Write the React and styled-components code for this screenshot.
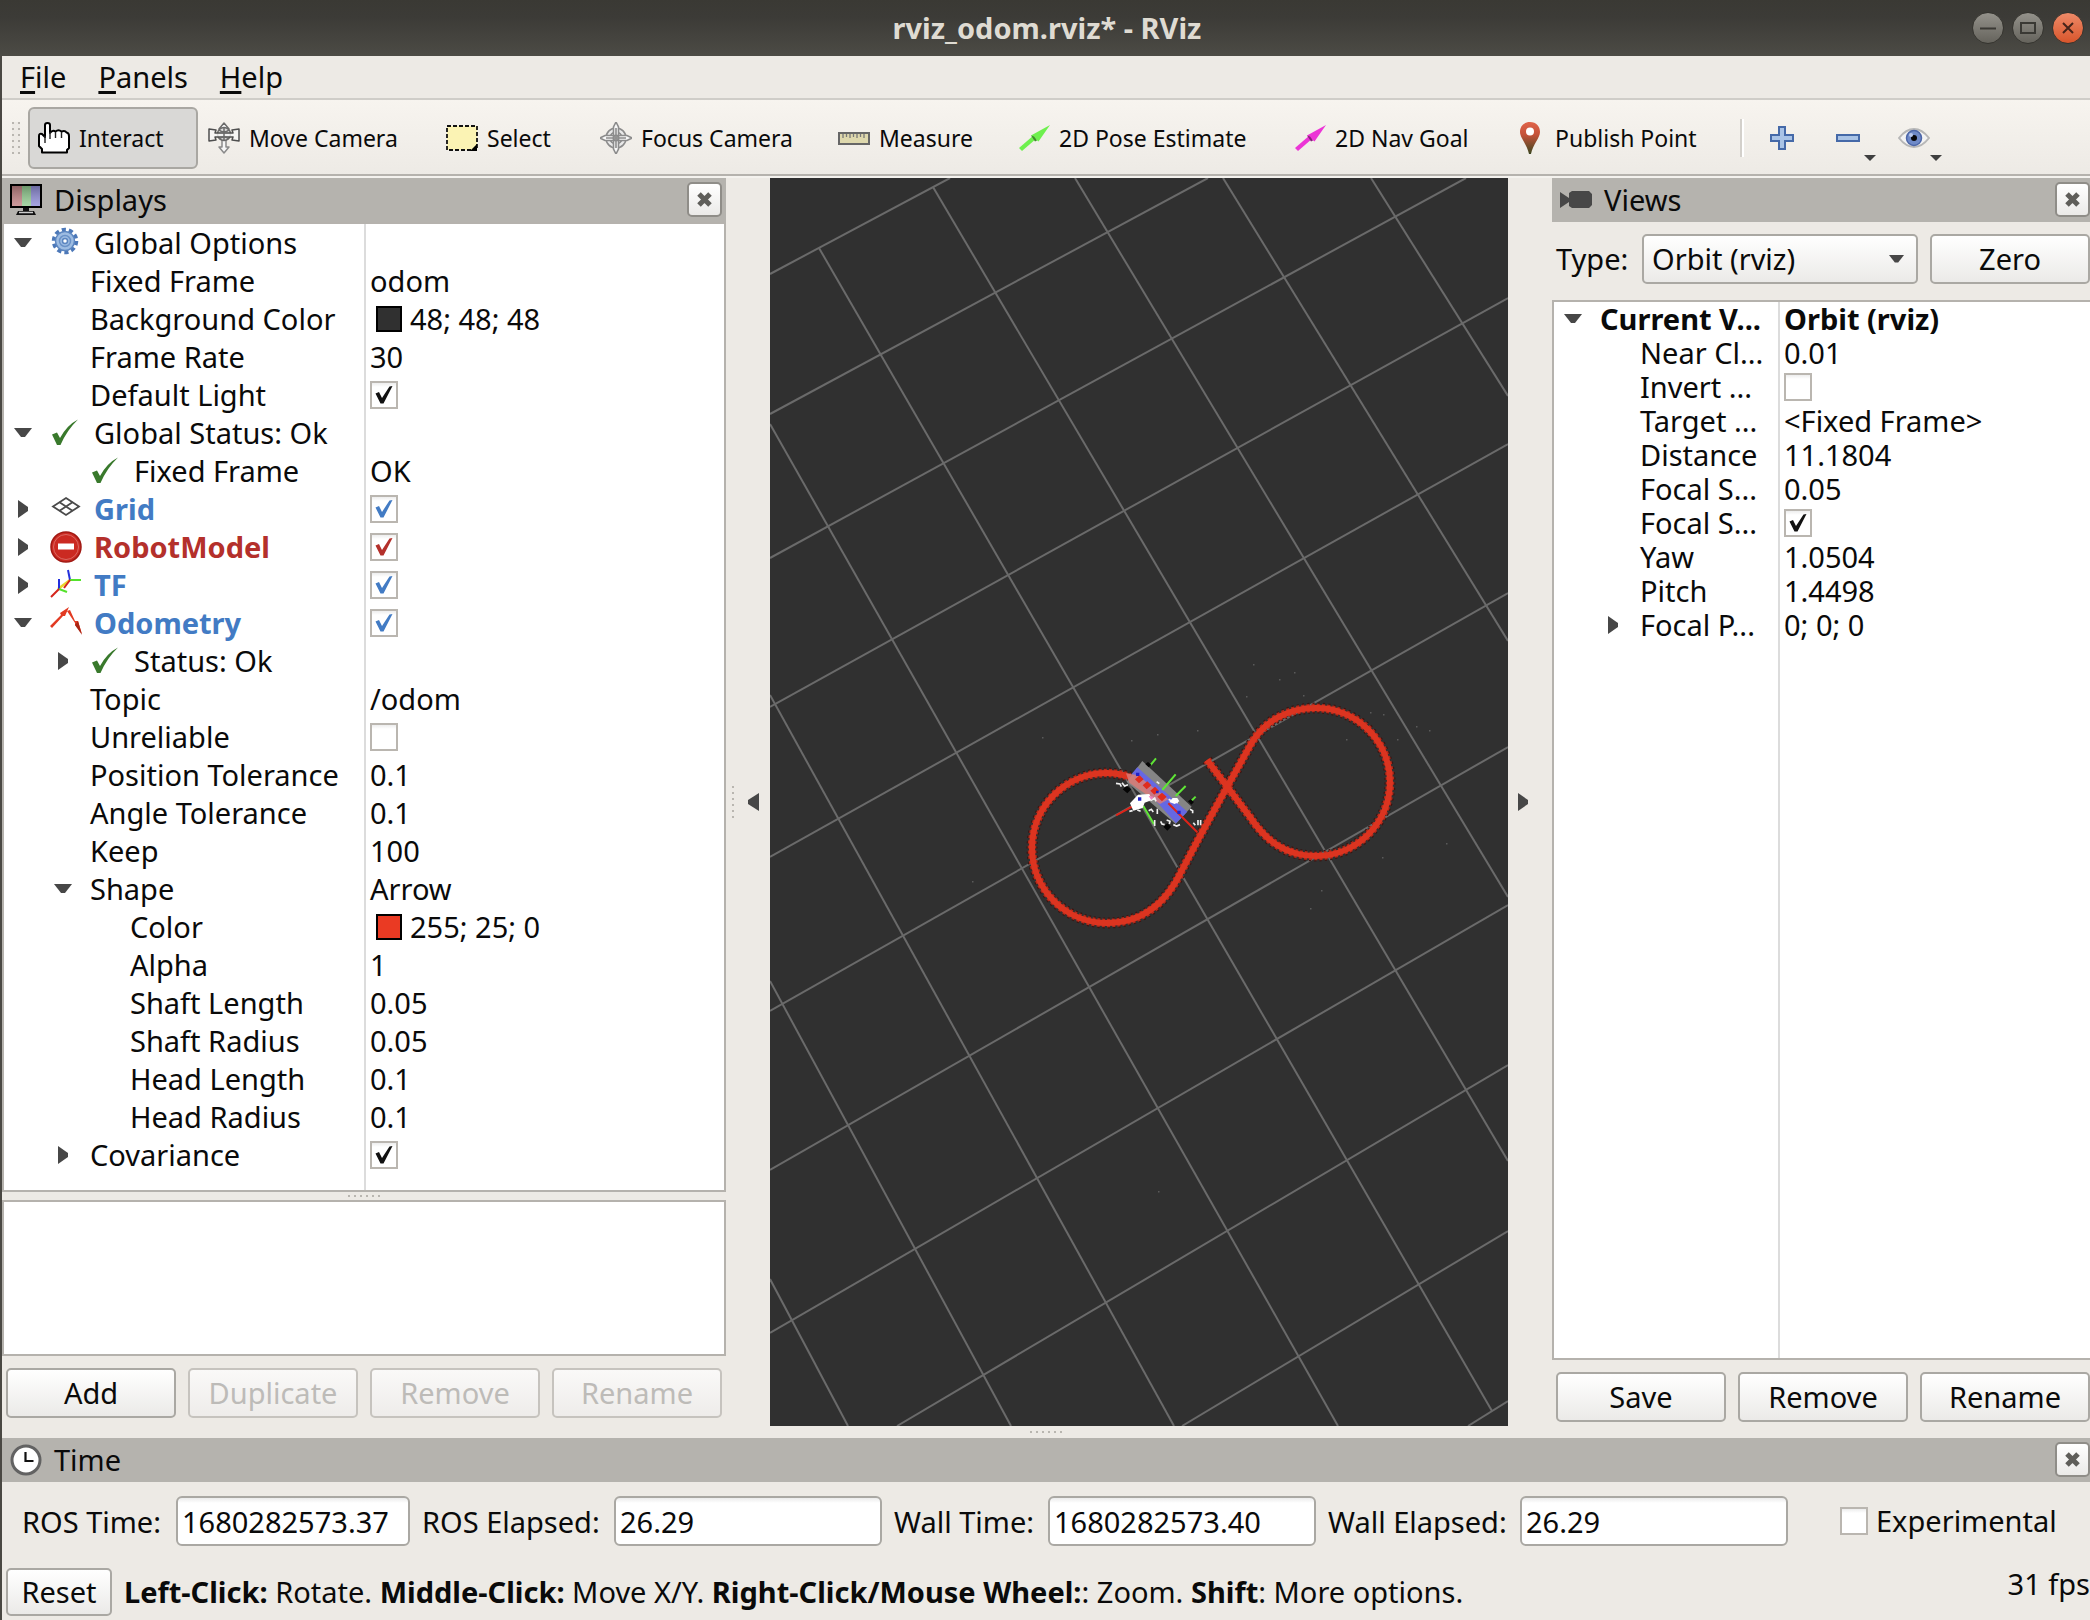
import React from "react";
import styled, { createGlobalStyle, css } from "styled-components";

const c = {
  window: "#edeae5",
  header: "#b5b3ae",
  line: "#b5b2ad",
  divider: "#dcdcdc",
  ink: "#0a0a0a",
  arrow: "#474747",
  blue: "#427bc4",
  red: "#b4302b",
};

const Global = createGlobalStyle`
  * { box-sizing: border-box; }
  body {
    margin: 0;
    background: ${c.window};
    color: ${c.ink};
    font: 29px/34px "Noto Sans", "Open Sans", sans-serif;
  }
  button, input, select { font: inherit; color: inherit; margin: 0; }
`;

const Window = styled.div`
  min-height: 100vh;
  display: flex;
  flex-direction: column;
  background: ${c.window};
  overflow: hidden;
`;

/* ---------- title bar ---------- */

const TitleBar = styled.header`
  height: 56px;
  flex: none;
  display: grid;
  grid-template-columns: 1fr auto 1fr;
  align-items: center;
  padding: 0 6px 0 10px;
  background: linear-gradient(#3a3934, #3c3b37 30%, #4c4b45);
`;

const Title = styled.h1`
  grid-column: 2;
  margin: 0;
  font-size: 29px;
  font-weight: 700;
  color: #dfdbd2;
`;

const WindowButtons = styled.div`
  display: flex;
  justify-content: flex-end;
  gap: 8px;
`;

const RoundButton = styled.button`
  width: 32px;
  height: 32px;
  padding: 0;
  border: 1px solid #35342f;
  border-radius: 50%;
  display: grid;
  place-items: center;
  background: ${(p) =>
    p.$close ? "linear-gradient(#ee8a68, #d8552b)" : "linear-gradient(#94928b, #65635c)"};
`;

const Body = styled.div`
  flex: 1;
  display: flex;
  flex-direction: column;
  border-left: 2px solid #4a4843;
`;

/* ---------- menu and tool bar ---------- */

const MenuBar = styled.nav`
  height: 44px;
  display: flex;
  align-items: center;
  padding-left: 2px;
  border-bottom: 2px solid #cfcdc8;
`;

const MenuItem = styled.button`
  padding: 0 16px;
  border: 0;
  background: none;
  line-height: 34px;
`;

const Mnemonic = styled.span`
  text-decoration: underline 3px;
  text-underline-offset: 3px;
`;

const ToolBar = styled.div`
  height: 78px;
  display: flex;
  align-items: center;
  padding: 0 8px;
  background: linear-gradient(#f7f4ef, ${c.window});
  border-bottom: 2px solid #f4f2ee;
  box-shadow: inset 0 -2px 0 ${c.line};
  font-size: 23px;
`;

const Dots = styled.span`
  display: block;
  width: ${(p) => p.$w}px;
  height: ${(p) => p.$h}px;
  background: conic-gradient(from 90deg at 4px 4px, transparent 75%, #b9b6b0 0) 0 0 / 6px 6px;
  background: linear-gradient(90deg, ${c.window} 4px, transparent 4px) 2px 0 / 6px 100%,
    repeating-linear-gradient(#b9b6b0 0 2px, ${c.window} 2px 6px);
`;

const Grip = styled.span`
  width: 18px;
  flex: none;
  padding-left: 2px;
`;

const ToolButton = styled.button`
  height: 62px;
  min-width: ${(p) => p.$w}px;
  display: flex;
  align-items: center;
  gap: 9px;
  padding: 0 0 0 8px;
  border: 2px solid transparent;
  border-radius: 6px;
  background: none;
  white-space: nowrap;
  ${(p) =>
    p.$active &&
    css`
      background: #d9d8d6;
      border-color: #a9a7a2;
    `}
`;

const ToolRule = styled.span`
  width: 4px;
  height: 38px;
  margin: 0 6px 0 20px;
  border-left: 2px solid #d3d0cb;
  border-right: 2px solid #fff;
`;

const IconTool = styled.button`
  width: 66px;
  height: 62px;
  padding: 0;
  border: 0;
  background: none;
  display: grid;
  grid-template-columns: 16px 32px 18px;
  align-items: center;
`;

const IconToolMain = styled.span`
  grid-column: 2;
  display: flex;
`;

const DropMark = styled.span`
  align-self: end;
  margin: 0 0 8px 0;
  border: 6px solid transparent;
  border-top-color: #3f3f3f;
  border-bottom-width: 0;
  width: 12px;
`;

/* ---------- dock panels ---------- */

const Main = styled.main`
  flex: 1;
  display: grid;
  grid-template-columns: 724px 44px minmax(0, 1fr) 44px 538px;
`;

const Panel = styled.section`
  display: flex;
  flex-direction: column;
  min-width: 0;
`;

const PanelHeader = styled.div`
  height: 44px;
  flex: none;
  display: flex;
  align-items: center;
  gap: 12px;
  padding: 0 ${(p) => p.$right}px 0 8px;
  background: ${c.header};
`;

const PanelTitle = styled.h2`
  flex: 1;
  margin: 0;
  font-size: 29px;
  font-weight: 400;
`;

const CloseButton = styled.button`
  width: 35px;
  height: 35px;
  padding: 0;
  margin-bottom: 2px;
  border: 2px solid #8f8d88;
  border-radius: 5px;
  background: linear-gradient(#fff, #ebeae8);
  display: grid;
  place-items: center;
`;

const TreePane = styled.div`
  flex: 1;
  border: 2px solid ${c.line};
  border-right-width: ${(p) => (p.$openRight ? 0 : 2)}px;
  background: linear-gradient(${c.divider}, ${c.divider}) ${(p) => p.$name}px 0 / 2px 100% no-repeat #fff;
`;

const Tree = styled.table`
  width: 100%;
  table-layout: fixed;
  border-collapse: collapse;
`;

const NameCol = styled.col`
  width: ${(p) => p.$w}px;
`;

const TreeRow = styled.tr`
  height: ${(p) => p.$h}px;
  color: ${(p) => p.$color || c.ink};
  font-weight: ${(p) => (p.$bold ? 700 : 400)};
`;

const Cell = styled.td`
  padding: 0;
`;

const NameInner = styled.div`
  height: 34px;
  display: flex;
  align-items: center;
  padding-left: ${(p) => p.$level * 40}px;
  white-space: nowrap;
`;

const ExpandSlot = styled.span`
  width: 46px;
  flex: none;
  padding-left: 10px;
  display: flex;
`;

const IconSlot = styled.span`
  width: 32px;
  height: 32px;
  flex: none;
  display: flex;
  margin-right: 12px;
`;

const ValueInner = styled.div`
  height: 34px;
  display: flex;
  align-items: center;
  padding-left: 6px;
  white-space: nowrap;
`;

const Swatch = styled.span`
  width: 26px;
  height: 26px;
  margin: 0 8px 0 6px;
  border: 2px solid #000;
  background: ${(p) => p.$color};
`;

const CheckWrap = styled.span`
  display: grid;
  width: 28px;
  height: 28px;
  flex: none;
  & > * { grid-area: 1 / 1; }
  & > svg { pointer-events: none; }
`;

const CheckBox = styled.input`
  appearance: none;
  width: 28px;
  height: 28px;
  border: 2px solid #bab6b0;
  background: linear-gradient(#ededed, #fff 4px);
`;

const Splitter = styled.div`
  height: ${(p) => p.$h}px;
  display: grid;
  place-items: center;
  flex: none;
`;

const Description = styled.div`
  height: 156px;
  flex: none;
  border: 2px solid ${c.line};
  background: #fff;
`;

const ButtonRow = styled.div`
  display: grid;
  grid-template-columns: repeat(${(p) => p.$n}, 1fr);
  gap: 12px;
  padding: 12px 4px ${(p) => p.$bottom}px;
  ${(p) => p.$flush && "padding-right: 0;"}
`;

const control = css`
  border: 2px solid #aaa8a3;
  border-radius: 5px;
  background: linear-gradient(#fff, #ebeae8);
`;

const Button = styled.button`
  height: ${(p) => p.$h || 50}px;
  padding: 0 10px;
  ${control}
  &:disabled {
    color: #bdbbb8;
    border-color: #c6c3be;
    background: linear-gradient(#faf9f8, #eeecea);
  }
`;

const TypeRow = styled.div`
  display: grid;
  grid-template-columns: 74px 276px 1fr;
  column-gap: 12px;
  align-items: center;
  padding: 12px 0 16px 4px;
`;

const ComboWrap = styled.span`
  display: grid;
  align-items: center;
  & > * { grid-area: 1 / 1; }
  & > svg { justify-self: end; margin-right: 14px; pointer-events: none; }
`;

const Combo = styled.select`
  appearance: none;
  height: 50px;
  width: 100%;
  padding: 0 8px;
  ${control}
`;

const Side = styled.div`
  display: flex;
  align-items: center;
  justify-content: space-between;
  padding: ${(p) => (p.$right ? "0 4px 0 6px" : "0 11px 0 6px")};
`;

const SideButton = styled.button`
  padding: 0;
  border: 0;
  background: none;
  display: flex;
`;

const Viewport = styled.div`
  background: #303030;
  display: flex;
  min-width: 0;
  & > svg { width: 100%; height: 100%; display: block; }
`;

/* ---------- time panel and status ---------- */

const TimeRow = styled.div`
  display: grid;
  grid-template-columns: 146px 234px 184px 268px 146px 268px 184px 268px 1fr;
  column-gap: 10px;
  align-items: center;
  padding: 14px 0 22px 18px;
`;

const Field = styled.input`
  height: 50px;
  width: 100%;
  min-width: 0;
  padding: 0 4px;
  border: 2px solid #aaa8a3;
  border-radius: 6px;
  background: linear-gradient(#ececec, #fff 5px);
`;

const FieldLabel = styled.label`
  padding: 2px 0 0 2px;
  white-space: nowrap;
`;

const Experimental = styled.label`
  display: flex;
  align-items: center;
  gap: 8px;
  padding-left: 42px;
  white-space: nowrap;
`;

const StatusRow = styled.footer`
  display: grid;
  grid-template-columns: 106px 1fr auto;
  column-gap: 12px;
  align-items: center;
  padding: 0 0 4px 4px;
`;

const Hint = styled.p`
  margin: 0;
  white-space: nowrap;
`;

const Fps = styled.span`
  align-self: start;
  line-height: 32px;
`;

/* ---------- icons ---------- */

const Svg = ({ children, size = 32, box = 32, ...rest }) => (
  <svg width={size} height={size} viewBox={`0 0 ${box} ${box}`} aria-hidden="true" {...rest}>
    {children}
  </svg>
);

const ArrowDown = ({ w = 18 }) => (
  <svg width={w} height="11" viewBox="0 0 18 11" aria-hidden="true">
    <path d="M0 0h18L11 9H7z" fill={c.arrow} />
  </svg>
);
const ArrowRight = () => (
  <svg width="18" height="18" viewBox="0 0 18 18" aria-hidden="true">
    <path d="M4 0l10 7v4L4 18z" fill={c.arrow} />
  </svg>
);
const ArrowLeft = () => (
  <svg width="11" height="18" viewBox="0 0 11 18" aria-hidden="true">
    <path d="M11 0L0 7v4l11 7z" fill={c.arrow} />
  </svg>
);

const HandIcon = () => (
  <Svg>
    <path
      d="M4 30.5V27L1 24V14Q1 11 4 12L7 15V3Q7 1 9.500 1T12 3V11Q14.500 7.500 17.500 9.500Q20.500 7 23.500 9.500Q27 8 28.500 10.500Q31 11 31 14V26L29 28V30.500Z"
      fill="#fff"
      stroke="#000"
      strokeWidth="2"
      strokeLinejoin="round"
    />
    <path d="M7 14v7M12 10v7M17.500 10v6M23.500 10v6" stroke="#222" strokeWidth="1.4" />
  </Svg>
);

const MoveIcon = () => (
  <Svg>
    <g stroke="#6b6b6b" strokeWidth="1.5" strokeLinejoin="round">
      <path d="M16 1l5 6h-3v5h-4V7h-3z" fill="#f6f6f6" />
      <path d="M16 31l5-6h-3v-8h-4v8h-3z" fill="#f6f6f6" stroke="#8a8a8a" />
      <circle cx="16" cy="12" r="6.5" fill="#dedede" />
      <path d="M1 7l7 1-1 3h18l-1-3 7-1v12l-7-1 1-3H7l1 3-7 1z" fill="#f6f6f6" fillOpacity=".8" stroke="#4f4f4f" />
      <path d="M16 5v14M11 8q5 4 10 0M11 17q5-4 10 0" fill="none" />
    </g>
  </Svg>
);

const SelectIcon = () => (
  <Svg>
    <rect x="1" y="4" width="30" height="24" fill="#fbf3b4" stroke="#111" strokeWidth="1.8" strokeDasharray="4 2" />
    <path d="M31 22v7h-7z" fill="#000" />
  </Svg>
);

const FocusIcon = () => (
  <Svg>
    <g fill="none" stroke="#8c8c8c" strokeWidth="1.6">
      <circle cx="16" cy="16" r="10" fill="#e9e9e9" />
      <circle cx="16" cy="16" r="6" />
      <path d="M16 0l2.500 5v22L16 32l-2.500-5V5zM0 16l5-2.500h22L32 16l-5 2.500H5z" fill="#f8f8f8" />
      <path d="M16 6v20M6 16h20" />
      <circle cx="16" cy="16" r="2.5" />
    </g>
  </Svg>
);

const MeasureIcon = () => (
  <Svg>
    <rect x="1" y="11" width="30" height="11" fill="#ded8ad" stroke="#666" strokeWidth="2" />
    <path d="M5 12v4M8.500 12v3M12 12v4M15.500 12v3M19 12v4M22.500 12v3M26 12v4" stroke="#777" strokeWidth="1.3" />
  </Svg>
);

const PoseIcon = ({ color, dark }) => (
  <Svg>
    <path d="M1 26L16 13 19 16 4 29z" fill={color} />
    <path d="M32 3L13 13.500 20.500 19.500z" fill={color} />
    <path d="M13 13.500l4 6 2-1-3-4z" fill={dark} />
  </Svg>
);

const PinIcon = () => (
  <Svg>
    <defs>
      <linearGradient id="pin" x1="0" y1="0" x2="0" y2="1">
        <stop offset="0" stopColor="#e0644a" />
        <stop offset=".4" stopColor="#c45239" />
        <stop offset="1" stopColor="#3c4720" />
      </linearGradient>
    </defs>
    <path d="M16 0C9.500 0 6 4.500 6 10c0 6 7 12 9 22h2c2-10 9-16 9-22C26 4.500 22.500 0 16 0z" fill="url(#pin)" />
    <circle cx="16" cy="9.5" r="4" fill="#fff" />
  </Svg>
);

const PlusIcon = () => (
  <Svg>
    <path d="M13 5h6v8h8v6h-8v8h-6v-8H5v-6h8z" fill="#a9c3e6" stroke="#4569a8" strokeWidth="2" />
  </Svg>
);
const MinusIcon = () => (
  <Svg>
    <rect x="5" y="13" width="22" height="6" fill="#a9c3e6" stroke="#4569a8" strokeWidth="2" />
  </Svg>
);
const EyeIcon = () => (
  <Svg>
    <path d="M1 16Q8 7 16 7T31 16Q24 25 16 25T1 16z" fill="#f3f3f3" stroke="#b7b7b7" strokeWidth="2" />
    <circle cx="16" cy="16" r="7.5" fill="#6f8ac8" stroke="#4c66a8" strokeWidth="1.5" />
    <circle cx="16" cy="16" r="3" fill="#08080c" />
    <circle cx="13" cy="13" r="2" fill="#b9c8ec" />
  </Svg>
);

const DisplayIcon = () => (
  <Svg>
    <defs>
      <linearGradient id="screen" x1="0" y1="0" x2="0" y2="1">
        <stop offset="0" stopColor="#000" stopOpacity=".3" />
        <stop offset="1" stopColor="#fff" stopOpacity=".2" />
      </linearGradient>
    </defs>
    <path d="M2 2h10v20H2z" fill="#c48486" />
    <path d="M12 2h9v20h-9z" fill="#94cf92" />
    <path d="M21 2h9v20h-9z" fill="#9290dc" />
    <rect x="1" y="1" width="30" height="22" fill="url(#screen)" stroke="#000" strokeWidth="2" />
    <path d="M13 24h6v3h5l2 4H6l2-4h5z" fill="#111" />
    <path d="M9 28.500h14" stroke="#ccc" strokeWidth="1.5" />
  </Svg>
);

const CameraIcon = () => (
  <Svg>
    <path d="M0 8l9 6V9l3-2h17l3 3v11l-3 3H12l-3-2v-4l-9 6z" fill="#474747" />
  </Svg>
);

const ClockIcon = () => (
  <Svg>
    <circle cx="16" cy="16" r="14" fill="#fff" stroke="#626262" strokeWidth="3" />
    <path d="M15.500 8v9h8" fill="none" stroke="#111" strokeWidth="2.2" />
  </Svg>
);

const GearIcon = () => (
  <Svg>
    <circle cx="15" cy="14" r="11" fill="none" stroke="#4c78b8" strokeWidth="4.5" strokeDasharray="4 2.910" />
    <circle cx="15" cy="14" r="9.5" fill="#9dbce2" stroke="#5c86c0" strokeWidth="1.5" />
    <circle cx="15" cy="14" r="5.5" fill="none" stroke="#6a92c8" strokeWidth="1.5" />
    <circle cx="15" cy="14" r="2.5" fill="#fff" stroke="#5c86c0" strokeWidth="1.5" />
  </Svg>
);

const OkIcon = () => (
  <Svg>
    <path d="M2 17.500l5-2 3 5.500Q17 8 28 2.500 17 13 10.500 28L7 28z" fill="#39792c" />
  </Svg>
);

const GridIcon = () => (
  <Svg>
    <g fill="none" stroke="#4a4a4a" strokeWidth="1.8">
      <path d="M16 5l13 8.500L16 22 3 13.500z" />
      <path d="M9.500 9.300l13 8.500M22.500 9.300l-13 8.500" />
    </g>
  </Svg>
);

const ErrorIcon = () => (
  <Svg>
    <circle cx="16" cy="16" r="15" fill="#cb2a22" stroke="#a11913" strokeWidth="1.5" />
    <circle cx="16" cy="16" r="12.5" fill="none" stroke="#db6963" strokeWidth="1" />
    <rect x="8" y="12.5" width="16" height="6" fill="#fff" />
  </Svg>
);

const TfIcon = () => (
  <Svg>
    <g fill="none" strokeWidth="2">
      <path d="M8 20L20 11" stroke="#e9d52c" strokeWidth="2.5" />
      <path d="M9 20V10M20 11L18 1" stroke="#2330dc" />
      <path d="M9 20l8 3M20 11h11" stroke="#55e22c" />
      <path d="M9 20L1 28M20 11l-6 8" stroke="#d5251c" />
    </g>
  </Svg>
);

const OdometryIcon = () => (
  <Svg>
    <path d="M0 19L11 8l-1-2 9-6-4 9-2 0L2 21z" fill="#e23a22" />
    <path d="M17 4l3-1 5 11 3 0 4 13-7-9 0-2z" fill="#e23a22" />
    <path d="M25 18l7 10-4-14z" fill="#a82514" />
  </Svg>
);

const CloseMark = () => (
  <Svg size={17} box={17}>
    <path d="M3 3l11 11M14 3L3 14" stroke="#5f5e5a" strokeWidth="5" />
  </Svg>
);

/* ---------- shared parts ---------- */

function Check({ id, checked, color = "#111" }) {
  return (
    <CheckWrap>
      <CheckBox type="checkbox" id={id} defaultChecked={checked} />
      {checked && (
        <Svg size={28} box={28}>
          <path d="M5.500 12.500L9 11L12 17L19.500 5.500L22.500 5L13.500 22.500L10.500 22.500Z" fill={color} />
        </Svg>
      )}
    </CheckWrap>
  );
}

function PropertyTree({ label, rows, nameWidth, rowHeight, openRight }) {
  return (
    <TreePane $name={nameWidth} $openRight={openRight}>
      <Tree aria-label={label}>
        <colgroup>
          <NameCol $w={nameWidth} />
          <col />
        </colgroup>
        <tbody>
          {rows.map((r, i) => {
            const id = `${label}-${i}`;
            const isCheck = typeof r.check === "boolean";
            return (
              <TreeRow key={id} $h={rowHeight} $bold={r.bold} $color={r.color}>
                <Cell>
                  <NameInner $level={r.level}>
                    <ExpandSlot>
                      {r.open === true && <ArrowDown />}
                      {r.open === false && <ArrowRight />}
                    </ExpandSlot>
                    {r.icon && <IconSlot>{r.icon}</IconSlot>}
                    {isCheck ? <label htmlFor={id}>{r.name}</label> : <span>{r.name}</span>}
                  </NameInner>
                </Cell>
                <Cell>
                  <ValueInner>
                    {r.swatch && <Swatch $color={r.swatch} />}
                    {isCheck && <Check id={id} checked={r.check} color={r.color} />}
                    {r.value}
                  </ValueInner>
                </Cell>
              </TreeRow>
            );
          })}
        </tbody>
      </Tree>
    </TreePane>
  );
}

function Header({ icon, title, right = 0 }) {
  return (
    <PanelHeader $right={right}>
      {icon}
      <PanelTitle>{title}</PanelTitle>
      <CloseButton aria-label={`Close ${title}`}>
        <CloseMark />
      </CloseButton>
    </PanelHeader>
  );
}

/* ---------- data ---------- */

const displayRows = [
  { level: 0, open: true, icon: <GearIcon />, name: "Global Options" },
  { level: 1, name: "Fixed Frame", value: "odom" },
  { level: 1, name: "Background Color", swatch: "#303030", value: "48; 48; 48" },
  { level: 1, name: "Frame Rate", value: "30" },
  { level: 1, name: "Default Light", check: true },
  { level: 0, open: true, icon: <OkIcon />, name: "Global Status: Ok" },
  { level: 1, icon: <OkIcon />, name: "Fixed Frame", value: "OK" },
  { level: 0, open: false, icon: <GridIcon />, name: "Grid", check: true, bold: true, color: c.blue },
  { level: 0, open: false, icon: <ErrorIcon />, name: "RobotModel", check: true, bold: true, color: c.red },
  { level: 0, open: false, icon: <TfIcon />, name: "TF", check: true, bold: true, color: c.blue },
  { level: 0, open: true, icon: <OdometryIcon />, name: "Odometry", check: true, bold: true, color: c.blue },
  { level: 1, open: false, icon: <OkIcon />, name: "Status: Ok" },
  { level: 1, name: "Topic", value: "/odom" },
  { level: 1, name: "Unreliable", check: false },
  { level: 1, name: "Position Tolerance", value: "0.1" },
  { level: 1, name: "Angle Tolerance", value: "0.1" },
  { level: 1, name: "Keep", value: "100" },
  { level: 1, open: true, name: "Shape", value: "Arrow" },
  { level: 2, name: "Color", swatch: "#ea3a23", value: "255; 25; 0" },
  { level: 2, name: "Alpha", value: "1" },
  { level: 2, name: "Shaft Length", value: "0.05" },
  { level: 2, name: "Shaft Radius", value: "0.05" },
  { level: 2, name: "Head Length", value: "0.1" },
  { level: 2, name: "Head Radius", value: "0.1" },
  { level: 1, open: false, name: "Covariance", check: true },
];

const viewRows = [
  { level: 0, open: true, name: "Current V...", value: "Orbit (rviz)", bold: true },
  { level: 1, name: "Near Cl...", value: "0.01" },
  { level: 1, name: "Invert ...", check: false },
  { level: 1, name: "Target ...", value: "<Fixed Frame>" },
  { level: 1, name: "Distance", value: "11.1804" },
  { level: 1, name: "Focal S...", value: "0.05" },
  { level: 1, name: "Focal S...", check: true },
  { level: 1, name: "Yaw", value: "1.0504" },
  { level: 1, name: "Pitch", value: "1.4498" },
  { level: 1, open: false, name: "Focal P...", value: "0; 0; 0" },
];

const tools = [
  { label: "Interact", icon: <HandIcon />, w: 170, active: true },
  { label: "Move Camera", icon: <MoveIcon />, w: 238 },
  { label: "Select", icon: <SelectIcon />, w: 154 },
  { label: "Focus Camera", icon: <FocusIcon />, w: 238 },
  { label: "Measure", icon: <MeasureIcon />, w: 180 },
  { label: "2D Pose Estimate", icon: <PoseIcon color="#6ef04e" dark="#3f8a2c" />, w: 276 },
  { label: "2D Nav Goal", icon: <PoseIcon color="#ec35d6" dark="#8a1f7c" />, w: 220 },
  { label: "Publish Point", icon: <PinIcon />, w: 216 },
];

const timeFields = [
  ["ROS Time:", "1680282573.37"],
  ["ROS Elapsed:", "26.29"],
  ["Wall Time:", "1680282573.40"],
  ["Wall Elapsed:", "26.29"],
];

/* ---------- 3D scene ---------- */

const gridLines = [
  [0, 96, 180, 0],
  [0, 236, 438, 0],
  [0, 380, 696, 0],
  [0, 529, 738, 120],
  [0, 679, 738, 266],
  [0, 833, 738, 415],
  [0, 992, 738, 569],
  [0, 1155, 738, 727],
  [127, 1248, 738, 887],
  [412, 1248, 738, 1053],
  [698, 1248, 738, 1223],
  [0, 1101, 78, 1248],
  [0, 803, 241, 1248],
  [0, 517, 404, 1248],
  [0, 246, 568, 1248],
  [49, 70, 722, 1233],
  [163, 9, 738, 983],
  [305, 0, 738, 719],
  [453, 0, 738, 463],
  [601, 0, 738, 218],
];

const track =
  "M437 582L480 639C496 663 516 678 546 678A74 74 0 0 0 620 604A74 74 0 0 0 546 530C518 530 494 543 481 566L457 609L430 658L412 692C396 726 372 745 337 745A75 75 0 0 1 262 670A75 75 0 0 1 337 595Q348 595 360 599";

const specks = [
  [483, 486], [509, 501], [476, 518], [524, 494], [533, 517], [568, 533], [600, 534], [613, 536], [576, 561], [646, 548], [659, 552],
  [627, 561], [361, 562], [387, 556], [427, 552], [272, 559], [202, 703], [676, 665], [612, 679], [388, 1013], [551, 712], [540, 730],
];

const Scene = () => (
  <svg viewBox="0 0 738 1248" preserveAspectRatio="xMidYMid slice" role="img" aria-label="3D view">
    <g stroke="#6a6a6a" strokeWidth="2">
      {gridLines.map(([x1, y1, x2, y2], i) => (
        <line key={i} x1={x1} y1={y1} x2={x2} y2={y2} />
      ))}
    </g>
    <g fill="#5a5a5a">
      {specks.map(([x, y], i) => (
        <rect key={i} x={x} y={y} width="1.5" height="1.5" />
      ))}
    </g>
    <g fill="none">
      <path d={track} stroke="#3a1512" strokeWidth="11" strokeDasharray="2 3" />
      <path d={track} stroke="#b22a1b" strokeWidth="8.5" strokeDasharray="3 2" />
      <path d={track} stroke="#dc3420" strokeWidth="6" />
    </g>
    <g transform="translate(230 462) scale(.3333)">
      <path d="M427 363L575 500 527 552 380 425z" fill="#858585" />
      <path d="M412 382L562 515 528 550 395 402z" fill="#6668e2" />
      <path d="M378 400L412 405 505 478 480 492 388 428z" fill="#d97c78" opacity=".85" />
      <path d="M405 418l14-12 12 12-14 12zM428 436l14-12 12 12-14 12zM451 452l14-12 12 12-14 12zM472 470l14-12 14 12-14 14z" fill="#e02c1e" />
      <path d="M505 490L592 577M348 526L402 497" stroke="#df2318" strokeWidth="6" />
      <path d="M452 375l16-20M487 450l40-47M527 468l30-30M570 487l17-17M430 498l32 55" stroke="#5fe636" strokeWidth="6" />
      <path d="M368 448l12-10 14 10-12 12zM490 560l12-10 12 10-12 12zM436 372l8-6 10 8-8 8zM564 484l8-6 10 8-8 8z" fill="#050505" />
      <path d="M390 490l24-26 34-2 8 18-22 8-6 16-28 8z" fill="#fff" />
      <path
        d="M348 430l12 2 4 8M366 428l8 10 10-4M452 482l12-8 4 10M472 506v16M446 512l8-4 6 8M464 540v18M482 544l4 8 8 2M500 540l10 4-2 8M520 554l10 4 10-4M570 508l8 4 0 8M580 548l6 8M594 540v16M602 540v16M506 478l14 8 14 2M470 425l8 6M388 514l10-2M412 510l10 4"
        fill="none"
        stroke="#f0f0f0"
        strokeWidth="5"
      />
      <path d="M508 486l10-12 14 0 6 10-14 8z" fill="#fff" />
      <path d="M408 398h10v10h-10zM414 472h10v10h-10zM532 512h10v10h-10zM468 452h8v8h-8z" fill="#2222c8" />
      <path d="M446 468l14 2-6 10z" fill="#ee82c4" />
    </g>
  </svg>
);

/* ---------- application ---------- */

export default function App() {
  return (
    <Window>
      <Global />
      <TitleBar>
        <Title>rviz_odom.rviz* - RViz</Title>
        <WindowButtons>
          <RoundButton aria-label="Minimize">
            <Svg size={16} box={16}>
              <path d="M0 8.500h16" stroke="#3a3934" strokeWidth="2" />
            </Svg>
          </RoundButton>
          <RoundButton aria-label="Maximize">
            <Svg size={16} box={16}>
              <rect x="1" y="3" width="14" height="10" fill="none" stroke="#3a3934" strokeWidth="2" />
            </Svg>
          </RoundButton>
          <RoundButton $close aria-label="Close">
            <Svg size={16} box={16}>
              <path d="M3 3l10 10M13 3L3 13" stroke="#46241a" strokeWidth="2" />
            </Svg>
          </RoundButton>
        </WindowButtons>
      </TitleBar>

      <Body>
        <MenuBar>
          {["File", "Panels", "Help"].map((m) => (
            <MenuItem key={m}>
              <Mnemonic>{m[0]}</Mnemonic>
              {m.slice(1)}
            </MenuItem>
          ))}
        </MenuBar>

        <ToolBar>
          <Grip><Dots $w={8} $h={32} /></Grip>
          {tools.map((t) => (
            <ToolButton key={t.label} $w={t.w} $active={t.active}>
              {t.icon}
              {t.label}
            </ToolButton>
          ))}
          <ToolRule />
          <IconTool aria-label="Add tool">
            <IconToolMain><PlusIcon /></IconToolMain>
          </IconTool>
          <IconTool aria-label="Remove tool">
            <IconToolMain><MinusIcon /></IconToolMain>
            <DropMark />
          </IconTool>
          <IconTool aria-label="Toolbar visibility">
            <IconToolMain><EyeIcon /></IconToolMain>
            <DropMark />
          </IconTool>
        </ToolBar>

        <Main>
          <Panel>
            <Header icon={<DisplayIcon />} title="Displays" right={4} />
            <PropertyTree label="Displays" rows={displayRows} nameWidth={360} rowHeight={38} />
            <Splitter $h={8}><Dots $w={32} $h={2} /></Splitter>
            <Description />
            <ButtonRow $n={4} $bottom={8}>
              <Button>Add</Button>
              <Button disabled>Duplicate</Button>
              <Button disabled>Remove</Button>
              <Button disabled>Rename</Button>
            </ButtonRow>
          </Panel>

          <Side>
            <Dots $w={2} $h={32} />
            <SideButton aria-label="Collapse left panel"><ArrowLeft /></SideButton>
          </Side>

          <Viewport>
            <Scene />
          </Viewport>

          <Side $right>
            <SideButton aria-label="Collapse right panel"><ArrowRight /></SideButton>
          </Side>

          <Panel>
            <Header icon={<CameraIcon />} title="Views" />
            <TypeRow>
              <label htmlFor="view-type">Type:</label>
              <ComboWrap>
                <Combo id="view-type" defaultValue="orbit">
                  <option value="orbit">Orbit (rviz)</option>
                </Combo>
                <ArrowDown w={15} />
              </ComboWrap>
              <Button>Zero</Button>
            </TypeRow>
            <PropertyTree label="Views" rows={viewRows} nameWidth={224} rowHeight={34} openRight />
            <ButtonRow $n={3} $bottom={4} $flush>
              <Button>Save</Button>
              <Button>Remove</Button>
              <Button>Rename</Button>
            </ButtonRow>
          </Panel>
        </Main>

        <Splitter $h={12}><Dots $w={32} $h={2} /></Splitter>

        <Panel>
          <Header icon={<ClockIcon />} title="Time" />
          <TimeRow>
            {timeFields.map(([label, value]) => (
              <React.Fragment key={label}>
                <FieldLabel htmlFor={label}>{label}</FieldLabel>
                <Field id={label} defaultValue={value} readOnly />
              </React.Fragment>
            ))}
            <Experimental htmlFor="experimental">
              <Check id="experimental" checked={false} />
              Experimental
            </Experimental>
          </TimeRow>
        </Panel>

        <StatusRow>
          <Button $h={48}>Reset</Button>
          <Hint>
            <b>Left-Click:</b> Rotate. <b>Middle-Click:</b> Move X/Y. <b>Right-Click/Mouse Wheel:</b>: Zoom.{" "}
            <b>Shift</b>: More options.
          </Hint>
          <Fps>31 fps</Fps>
        </StatusRow>
      </Body>
    </Window>
  );
}
